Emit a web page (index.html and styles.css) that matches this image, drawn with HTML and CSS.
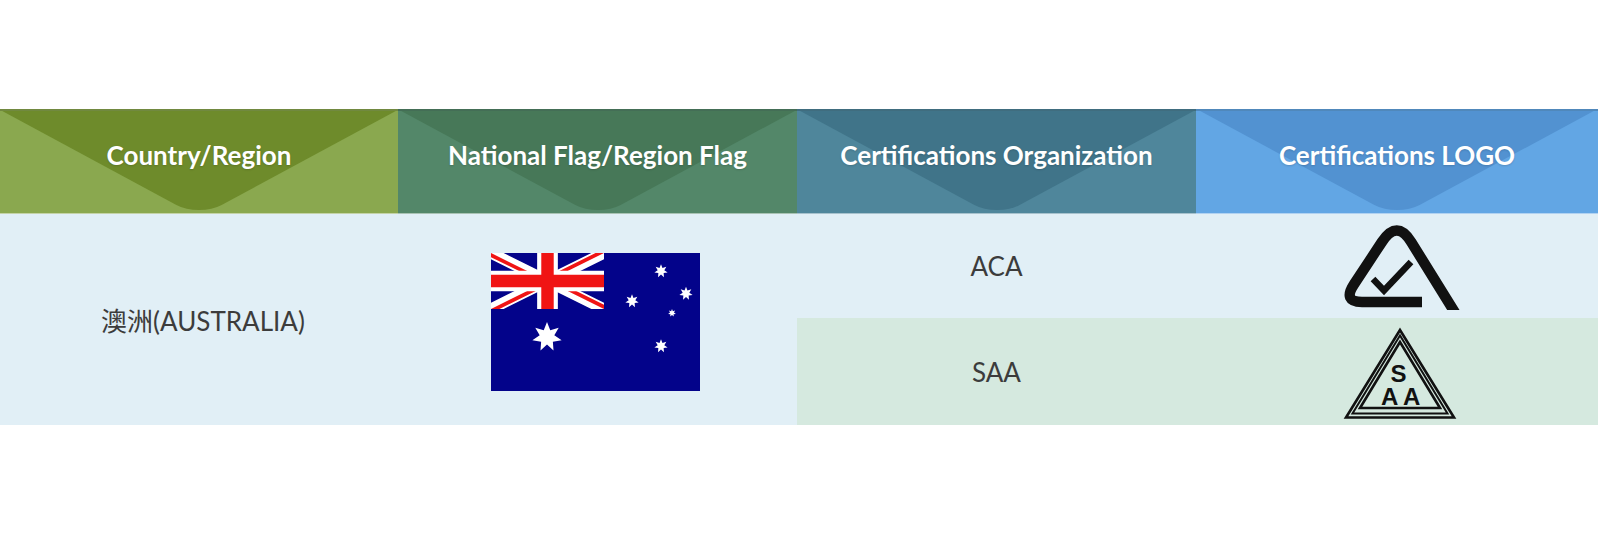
FILE: index.html
```html
<!DOCTYPE html>
<html lang="en">
<head>
<meta charset="utf-8">
<title>Certifications</title>
<link rel="stylesheet" href="styles.css">
</head>
<body>
<main class="page">
  <div class="cert-table">
    <div class="hcell h-country"><span class="htext">Country/Region</span></div>
    <div class="hcell h-flag"><span class="htext">National Flag/Region Flag</span></div>
    <div class="hcell h-org"><span class="htext">Certifications Organization</span></div>
    <div class="hcell h-logo"><span class="htext">Certifications LOGO</span></div>

    <div class="cell country">澳洲(AUSTRALIA)</div>

    <div class="cell flag-cell">
      <svg class="flag" width="209" height="138" viewBox="0 0 209 138" aria-label="Australia flag">
        <defs>
          <polygon id="star7" points="0,-1 0.2169,-0.4505 0.7818,-0.6235 0.4875,-0.1113 0.9749,0.2225 0.3909,0.3117 0.4339,0.9010 0,0.5 -0.4339,0.9010 -0.3909,0.3117 -0.9749,0.2225 -0.4875,-0.1113 -0.7818,-0.6235 -0.2169,-0.4505"/>
          <clipPath id="ujt"><path d="M30,15 h30 v15 z v15 h-30 z h-30 v-15 z v-15 h30 z"/></clipPath>
          <clipPath id="canton"><rect width="60" height="30"/></clipPath>
        </defs>
        <rect width="209" height="138" fill="#03038a"/>
        <g transform="scale(1.8833,1.8667)">
          <g clip-path="url(#canton)">
            <path d="M0,0 L60,30 M60,0 L0,30" stroke="#fff" stroke-width="6"/>
            <path d="M0,0 L60,30 M60,0 L0,30" clip-path="url(#ujt)" stroke="#f01414" stroke-width="4"/>
            <path d="M30,0 v30 M0,15 h60" stroke="#fff" stroke-width="11"/>
            <path d="M30,0 v30 M0,15 h60" stroke="#f01414" stroke-width="6.6"/>
          </g>
        </g>
        <g fill="#fff">
          <use href="#star7" transform="translate(56,84) scale(15)"/>
          <use href="#star7" transform="translate(170,18) scale(6.8)"/>
          <use href="#star7" transform="translate(195,40.5) scale(6.8)"/>
          <use href="#star7" transform="translate(141,48) scale(6.8)"/>
          <use href="#star7" transform="translate(181,60) scale(4)"/>
          <use href="#star7" transform="translate(170,93) scale(6.8)"/>
        </g>
      </svg>
    </div>

    <div class="cell org row-a">ACA</div>
    <div class="cell logo row-a">
      <svg class="logo-aca" width="124" height="88" viewBox="0 0 124 88" aria-label="ACA RCM logo">
        <path d="M117.7 95 L71.2 20 Q57 -3 41.9 20 L14.2 62 Q2.3 80 22 80 L82 80" fill="none" stroke="#111" stroke-width="10.5"/>
        <path d="M33 57 L44 68.5 L71 40" fill="none" stroke="#111" stroke-width="6.5"/>
      </svg>
    </div>

    <div class="cell org row-b">SAA</div>
    <div class="cell logo row-b">
      <svg class="logo-saa" width="114" height="96" viewBox="0 0 114 96" aria-label="SAA logo">
        <polygon points="57,5 3,92.5 111,92.5" fill="none" stroke="#111" stroke-width="2.6" stroke-linejoin="miter"/>
        <polygon points="57,10.5 9.5,88.5 104.5,88.5" fill="none" stroke="#111" stroke-width="2"/>
        <polygon points="57,17 17,83 97,83" fill="none" stroke="#111" stroke-width="2.6"/>
        <text class="saa-letter" x="55.5" y="56.5">S</text>
        <text class="saa-letter" x="46.7" y="80.3">A</text>
        <text class="saa-letter" x="68.7" y="80.3">A</text>
      </svg>
    </div>
  </div>
</main>
</body>
</html>
```
FILE: styles.css
```css
* { box-sizing: border-box; }

html, body {
  margin: 0;
  padding: 0;
  background: #ffffff;
}

.page {
  padding-top: 109px;
}

.cert-table {
  display: grid;
  width: 1598px;
  grid-template-columns: 398px 399px 399px 402px;
  grid-template-rows: 105px 104px 107px;
}

.hcell {
  position: relative;
  overflow: hidden;
  display: flex;
  align-items: center;
  justify-content: center;
  padding-bottom: 14px;
  border-top: 2px solid rgba(0, 0, 0, 0.18);
  border-bottom: 1px solid rgba(255, 255, 255, 0.5);
  font-family: "Lato", "Open Sans", sans-serif;
  font-weight: 700;
  font-size: 26px;
  color: #ffffff;
}

.hcell::before {
  content: "";
  position: absolute;
  left: 50%;
  top: -2px;
  width: 282.5px;
  height: 282.5px;
  transform: translate(-50%, -50%) scaleY(0.54) rotate(45deg);
  border-bottom-right-radius: 32px;
  background: var(--tri);
}

.htext {
  position: relative;
  text-shadow: 0 1px 2px rgba(0, 0, 0, 0.15);
}

.h-country { background: #8aa84f; --tri: #6e8b2b; }
.h-flag    { background: #538769; --tri: #477858; }
.h-org     { background: #4f869b; --tri: #407489; }
.h-logo    { background: #62a6e4; --tri: #5292d1; }

.cell {
  display: flex;
  align-items: center;
  justify-content: center;
  background: #e1eff6;
  font-family: "Lato", "Noto Sans CJK SC", sans-serif;
  font-size: 26px;
  color: #3c3c3c;
}

.country {
  grid-column: 1;
  grid-row: 2 / span 2;
  padding-left: 8px;
}

.flag-cell {
  grid-column: 2;
  grid-row: 2 / span 2;
  padding-top: 5px;
  padding-left: 0;
  padding-right: 5px;
}

.org { grid-column: 3; }
.logo { grid-column: 4; }

.row-a { grid-row: 2; }
.row-b { grid-row: 3; background: #d5e9df; }

.logo-aca { margin-left: 10px; margin-top: 0; }
.logo-saa { margin-left: 6px; margin-top: 2px; }

.flag { display: block; }

.saa-letter {
  font-family: "Liberation Sans", Arial, sans-serif;
  font-weight: 700;
  font-size: 24px;
  fill: #111;
  text-anchor: middle;
}
```
